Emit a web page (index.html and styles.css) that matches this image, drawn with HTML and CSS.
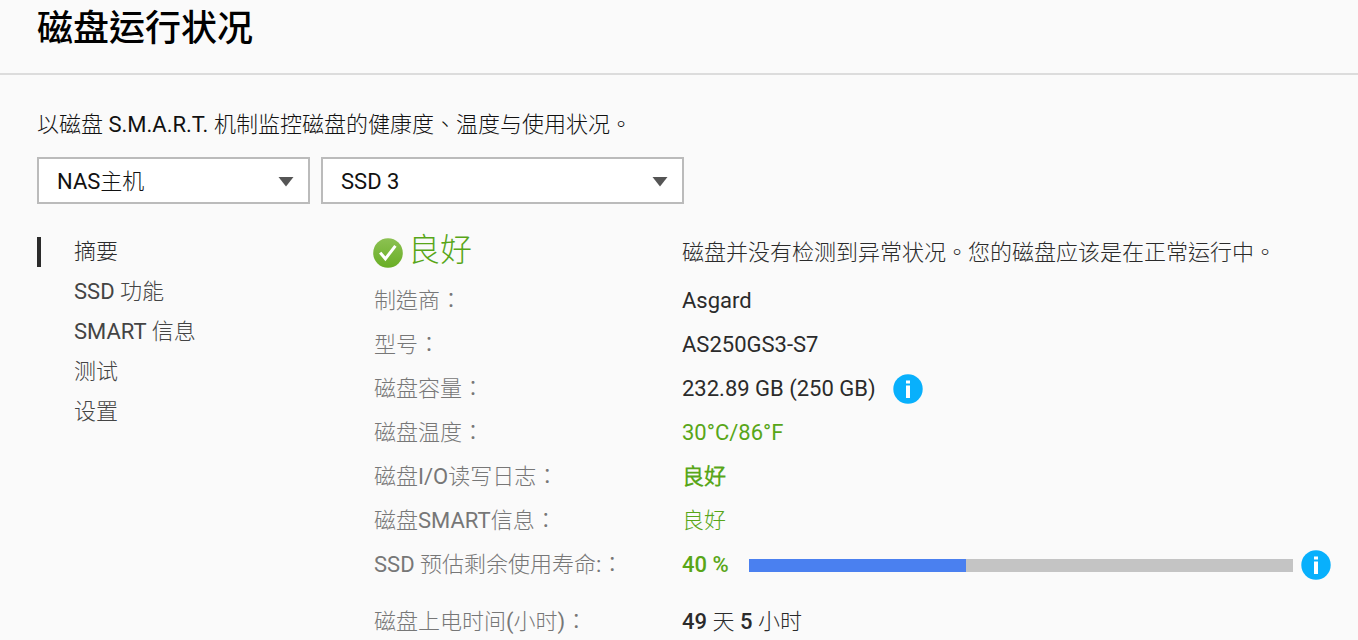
FILE: index.html
```html
<!DOCTYPE html>
<html lang="zh-Hant">
<head>
<meta charset="utf-8">
<meta name="viewport" content="width=device-width, initial-scale=1">
<title>磁盘运行状况</title>
<link rel="stylesheet" href="styles.css">
</head>
<body>
<header class="page-header">
  <h1 class="page-title">磁盘运行状况</h1>
</header>
<main class="page">
  <p class="intro">以磁盘 S.M.A.R.T. 机制监控磁盘的健康度、温度与使用状况。</p>
  <form class="filters">
    <div class="picker picker-host">
      <select class="picker-select" aria-label="主机"><option>NAS主机</option></select>
      <svg class="picker-arrow" viewBox="0 0 16 10" aria-hidden="true"><path d="M.5 0h15L8 9.5z" fill="#555"/></svg>
    </div>
    <div class="picker picker-disk">
      <select class="picker-select" aria-label="磁盘"><option>SSD 3</option></select>
      <svg class="picker-arrow" viewBox="0 0 16 10" aria-hidden="true"><path d="M.5 0h15L8 9.5z" fill="#555"/></svg>
    </div>
  </form>
  <div class="columns">
    <nav class="tabs">
      <a class="tab tab-active" href="#summary" aria-current="page">摘要</a>
      <a class="tab" href="#ssd">SSD 功能</a>
      <a class="tab" href="#smart">SMART 信息</a>
      <a class="tab" href="#test">测试</a>
      <a class="tab" href="#settings">设置</a>
    </nav>
    <section class="summary" id="summary">
      <div class="status">
        <h2 class="status-title">
          <svg class="icon" viewBox="0 0 30 30" aria-hidden="true">
            <defs><linearGradient id="ok" x1="0" y1="0" x2="0" y2="1"><stop offset="0" stop-color="#8cc152"/><stop offset="1" stop-color="#69ae25"/></linearGradient></defs>
            <circle cx="15" cy="15" r="14.8" fill="url(#ok)"/>
            <path d="M7.2 14.6l5.2 6.2L22.4 7.8" fill="none" stroke="#fff" stroke-width="3"/>
          </svg>
          <span class="status-label">良好</span>
        </h2>
        <p class="status-text">磁盘并没有检测到异常状况。您的磁盘应该是在正常运行中。</p>
      </div>
      <dl class="facts">
        <div class="fact"><dt>制造商：</dt><dd>Asgard</dd></div>
        <div class="fact"><dt>型号：</dt><dd>AS250GS3-S7</dd></div>
        <div class="fact"><dt>磁盘容量：</dt><dd class="with-info">232.89 GB (250 GB)
          <button class="info" type="button" aria-label="容量说明"><svg class="icon" viewBox="0 0 30 30" aria-hidden="true"><circle cx="15" cy="15" r="14.7" fill="#08b0fc"/><path d="M13 6.4h4v3.2h-4zM13 11.5h4v12.6h-4z" fill="#fff"/></svg></button></dd></div>
        <div class="fact"><dt>磁盘温度：</dt><dd class="good">30°C/86°F</dd></div>
        <div class="fact"><dt>磁盘I/O读写日志：</dt><dd class="good strong">良好</dd></div>
        <div class="fact"><dt>磁盘SMART信息：</dt><dd class="good">良好</dd></div>
        <div class="fact"><dt>SSD 预估剩余使用寿命:：</dt><dd class="life"><span class="good medium">40 %</span>
          <div class="bar" role="progressbar" aria-label="SSD 预估剩余使用寿命" aria-valuemin="0" aria-valuemax="100" aria-valuenow="40"><div class="bar-fill" style="width: 40%"></div></div>
          <button class="info" type="button" aria-label="寿命说明"><svg class="icon" viewBox="0 0 30 30" aria-hidden="true"><circle cx="15" cy="15" r="14.7" fill="#08b0fc"/><path d="M13 6.4h4v3.2h-4zM13 11.5h4v12.6h-4z" fill="#fff"/></svg></button></dd></div>
        <div class="fact fact-spaced"><dt>磁盘上电时间(小时)：</dt><dd><span class="medium">49</span> 天 <span class="medium">5</span> 小时</dd></div>
      </dl>
    </section>
  </div>
</main>
</body>
</html>
```
FILE: styles.css
```css
* {
  box-sizing: border-box;
}

body {
  margin: 0;
  background: #fafafa;
  color: #2b2b2b;
  font-family: Roboto, "Noto Sans CJK TC Light", "Noto Sans CJK TC", sans-serif;
  font-size: 22px;
  line-height: 32px;
}

h1, h2, p, dl, dt, dd {
  margin: 0;
}

.page-header {
  padding: 0 37px 23px;
  border-bottom: 2px solid #dcdcdc;
}

.page-title {
  color: #000;
  font-family: "Noto Sans CJK TC Medium", "Noto Sans CJK TC", sans-serif;
  font-size: 36px;
  font-weight: 500;
  line-height: 50px;
}

.page {
  padding: 34px 27px 0 37px;
}

.intro {
  color: #111;
}

.filters {
  display: flex;
  gap: 11px;
  margin-top: 16px;
}

.picker {
  position: relative;
}

.picker-host {
  width: 273px;
}

.picker-disk {
  width: 363px;
}

.picker-select {
  display: block;
  width: 100%;
  height: 47px;
  padding: 2px 48px 0 18px;
  appearance: none;
  border: 2px solid #bbb;
  border-radius: 0;
  background: #fff;
  color: #111;
  font: inherit;
}

.picker-arrow {
  position: absolute;
  top: 20px;
  right: 16px;
  width: 16px;
  height: 10px;
  pointer-events: none;
}

.columns {
  display: grid;
  grid-template-columns: 336px minmax(0, 1fr);
  margin-top: 27px;
}

.tabs {
  display: flex;
  flex-direction: column;
  gap: 10px;
  padding-top: 6px;
}

.tab {
  padding-left: 33px;
  border-left: 4px solid transparent;
  color: #444;
  line-height: 30px;
  text-decoration: none;
}

.tab-active {
  border-left-color: #2b2b2b;
  color: #2b2b2b;
}

.status,
.fact {
  display: grid;
  grid-template-columns: 309px minmax(0, 1fr);
  align-items: center;
}

.status {
  min-height: 44px;
  margin-bottom: 4px;
}

.status-title {
  display: flex;
  align-items: center;
  gap: 5px;
  color: #58a618;
  font-size: 32px;
  font-weight: 400;
  line-height: 38px;
}

.status-label {
  padding-bottom: 6px;
}

.icon {
  display: block;
  flex: none;
  width: 30px;
  height: 30px;
}

.fact {
  min-height: 44px;
}

.fact-spaced {
  margin-top: 13px;
}

dt {
  padding-left: 1px;
  color: #777;
}

.good {
  color: #58a618;
}

.medium {
  font-weight: 500;
}

.strong {
  font-weight: 700;
}

.with-info {
  display: flex;
  align-items: center;
  gap: 17px;
}

.info {
  flex: none;
  padding: 0;
  border: 0;
  background: none;
  cursor: pointer;
}

.life {
  display: flex;
  align-items: center;
  gap: 8px;
}

.bar {
  flex: 1;
  height: 13px;
  margin-left: 12px;
  background: #c4c4c4;
}

.bar-fill {
  height: 100%;
  background: #4a80f0;
}
```
